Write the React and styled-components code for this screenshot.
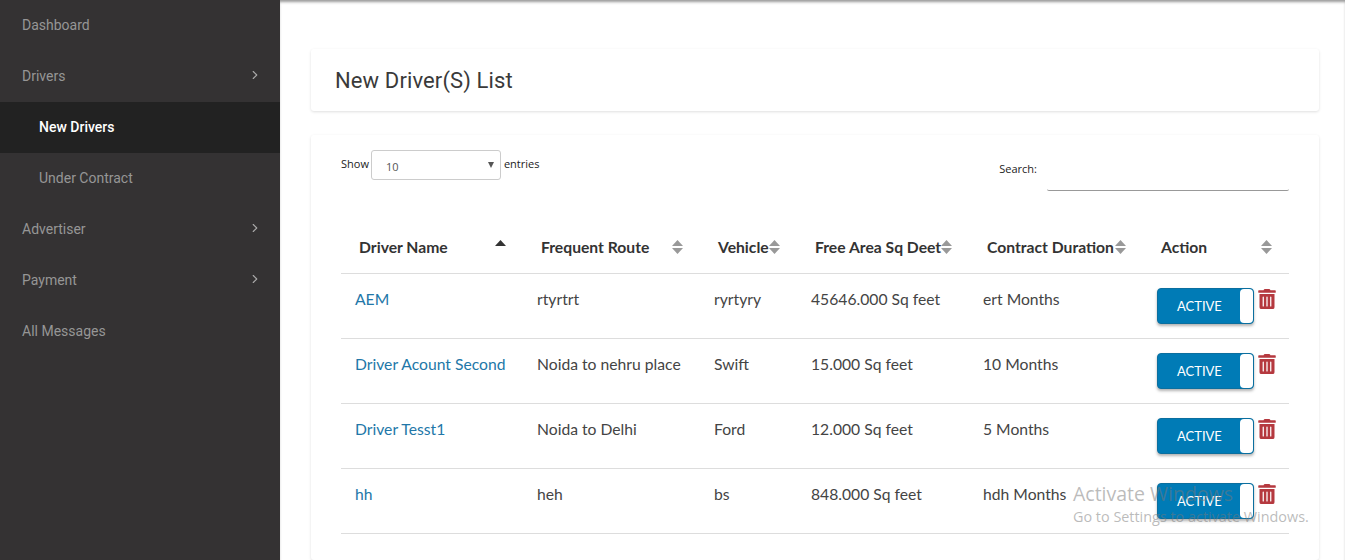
import React from "react";
import styled, { createGlobalStyle } from "styled-components";
import { FaTrashAlt } from "react-icons/fa";
import { FiChevronRight } from "react-icons/fi";

const GlobalStyle = createGlobalStyle`
  html, body {
    margin: 0;
    padding: 0;
    background: #fff;
    overflow: hidden;
  }
  * { box-sizing: border-box; }
`;

const Page = styled.div`
  display: flex;
  height: 560px;
  overflow: hidden;
  position: relative;
`;

const Sidebar = styled.nav`
  width: 280px;
  flex: none;
  background: #343233;
  font-family: Roboto, sans-serif;
  font-size: 14px;
`;

const NavItem = styled.div`
  height: 51px;
  display: flex;
  align-items: center;
  justify-content: space-between;
  padding: 0 18px 2px ${(p) => (p.$sub ? "39px" : "22px")};
  color: ${(p) => (p.$active ? "#fff" : "#969696")};
  background: ${(p) => (p.$active ? "#222222" : "transparent")};
  font-weight: ${(p) => (p.$active ? 500 : 400)};
  svg {
    color: #aaa;
    margin-top: -2px;
  }
`;

const Main = styled.main`
  flex: 1;
  min-width: 0;
  padding: 49px 26px 0 31px;
  box-shadow: inset 0 3px 3px -1px #999;
  display: flex;
  flex-direction: column;
  gap: 24px;
`;

const Card = styled.section`
  background: #fff;
  border-radius: 3px;
  box-shadow: 0 1px 3px rgba(0, 0, 0, 0.13);
`;

const TitleCard = styled(Card)`
  height: 62px;
  display: flex;
  align-items: center;
  padding-left: 24px;
`;

const Title = styled.h1`
  margin: 0;
  font-family: Roboto, sans-serif;
  font-size: 22px;
  font-weight: 400;
  letter-spacing: 0.12px;
  color: #3a3a3a;
`;

const ListCard = styled(Card)`
  flex: 1;
  padding: 15px 30px 0;
  font-family: Lato, sans-serif;
`;

const Controls = styled.div`
  display: flex;
  justify-content: space-between;
  height: 72px;
  font-family: "Open Sans", sans-serif;
  font-size: 11px;
  color: #222;
`;

const Length = styled.div`
  display: flex;
  align-items: flex-start;
  gap: 2px;
  span {
    margin-top: 6px;
  }
  span:last-child {
    margin-left: 1px;
  }
`;

const SelectBox = styled.div`
  width: 130px;
  height: 30px;
  border: 1px solid #ccc;
  border-radius: 3px;
  display: flex;
  align-items: center;
  justify-content: space-between;
  padding: 2px 4px 0 14px;
  color: #555;
  font-size: 11px;
  &::after {
    content: "";
    border-left: 3.5px solid transparent;
    border-right: 3.5px solid transparent;
    border-top: 6px solid #555;
    margin-right: 2px;
    margin-top: -2px;
  }
`;

const Search = styled.div`
  display: flex;
  align-items: flex-start;
  gap: 10px;
  span {
    margin-top: 11px;
  }
`;

const SearchInput = styled.div`
  width: 242px;
  height: 41px;
  border-bottom: 1px solid #999;
  border-radius: 0 0 2px 2px;
`;

const Table = styled.table`
  width: 948px;
  border-collapse: collapse;
  table-layout: fixed;
`;

const Head = styled.th`
  height: 51px;
  padding: 0 0 1px 18px;
  font-size: 15.7px;
  font-weight: 700;
  text-align: left;
  color: #333;
  white-space: nowrap;
  border-bottom: 1px solid #ddd;
`;

const HeadInner = styled.div`
  display: flex;
  align-items: center;
  justify-content: space-between;
  padding-right: 17px;
  svg {
    flex: none;
    margin-top: 1px;
  }
`;

const Cell = styled.td`
  height: 65px;
  padding: 0 0 14px 14px;
  font-size: 15.7px;
  color: #444;
  white-space: nowrap;
  border-bottom: 1px solid #ddd;
`;

const DriverLink = styled.a`
  color: #2277a8;
  text-decoration: none;
`;

const ActionCell = styled(Cell)`
  padding-bottom: 0;
`;

const ActionRow = styled.div`
  display: flex;
  align-items: flex-start;
  gap: 3px;
  svg {
    color: #b5393f;
    margin-top: 1px;
  }
`;

const Toggle = styled.div`
  width: 97px;
  height: 36px;
  background: #007bb6;
  border: 1px solid #0b6f9f;
  border-radius: 4px;
  box-shadow: 0 2px 3px rgba(0, 0, 0, 0.3);
  color: #fff;
  font-size: 13px;
  display: flex;
  align-items: center;
  justify-content: space-between;
  padding-left: 19px;
  &::after {
    content: "";
    width: 13px;
    height: 34px;
    background: #fff;
    border-radius: 4px;
  }
`;

const Watermark = styled.div`
  position: absolute;
  left: 1073px;
  top: 481px;
  font-family: "Open Sans", sans-serif;
  color: rgba(120, 120, 120, 0.5);
  pointer-events: none;
`;

const WatermarkTitle = styled.div`
  font-size: 19.5px;
  line-height: 26px;
`;

const WatermarkText = styled.div`
  font-size: 14.4px;
  line-height: 20px;
`;

const SortIcon = ({ up }) => (
  <svg width="11" height="16" viewBox="0 0 11 16">
    <path d="M5.5 1 L11 7 H0 Z" fill={up ? "#333" : "#999"} />
    {!up && <path d="M5.5 15 L11 9 H0 Z" fill="#999" />}
  </svg>
);

const columns = [
  { label: "Driver Name", width: 182, up: true },
  { label: "Frequent Route", width: 177 },
  { label: "Vehicle", width: 97 },
  { label: "Free Area Sq Deet", width: 172 },
  { label: "Contract Duration", width: 174 },
  { label: "Action", width: 146 },
];

const drivers = [
  { name: "AEM", route: "rtyrtrt", vehicle: "ryrtyry", area: "45646.000 Sq feet", term: "ert Months" },
  { name: "Driver Acount Second", route: "Noida to nehru place", vehicle: "Swift", area: "15.000 Sq feet", term: "10 Months" },
  { name: "Driver Tesst1", route: "Noida to Delhi", vehicle: "Ford", area: "12.000 Sq feet", term: "5 Months" },
  { name: "hh", route: "heh", vehicle: "bs", area: "848.000 Sq feet", term: "hdh Months" },
];

export default function App() {
  return (
    <>
      <GlobalStyle />
      <Page>
        <Sidebar>
          <NavItem>Dashboard</NavItem>
          <NavItem>
            Drivers <FiChevronRight size={14} />
          </NavItem>
          <NavItem $sub $active>New Drivers</NavItem>
          <NavItem $sub>Under Contract</NavItem>
          <NavItem>
            Advertiser <FiChevronRight size={14} />
          </NavItem>
          <NavItem>
            Payment <FiChevronRight size={14} />
          </NavItem>
          <NavItem>All Messages</NavItem>
        </Sidebar>
        <Main>
          <TitleCard>
            <Title>New Driver(S) List</Title>
          </TitleCard>
          <ListCard>
            <Controls>
              <Length>
                <span>Show</span>
                <SelectBox>10</SelectBox>
                <span>entries</span>
              </Length>
              <Search>
                <span>Search:</span>
                <SearchInput />
              </Search>
            </Controls>
            <Table>
              <colgroup>
                {columns.map((c) => (
                  <col key={c.label} width={c.width} />
                ))}
              </colgroup>
              <thead>
                <tr>
                  {columns.map((c) => (
                    <Head key={c.label}>
                      <HeadInner>
                        {c.label}
                        <SortIcon up={c.up} />
                      </HeadInner>
                    </Head>
                  ))}
                </tr>
              </thead>
              <tbody>
                {drivers.map((d) => (
                  <tr key={d.name}>
                    <Cell>
                      <DriverLink href="#">{d.name}</DriverLink>
                    </Cell>
                    <Cell>{d.route}</Cell>
                    <Cell>{d.vehicle}</Cell>
                    <Cell>{d.area}</Cell>
                    <Cell>{d.term}</Cell>
                    <ActionCell>
                      <ActionRow>
                        <Toggle>ACTIVE</Toggle>
                        <FaTrashAlt size={20} />
                      </ActionRow>
                    </ActionCell>
                  </tr>
                ))}
              </tbody>
            </Table>
          </ListCard>
        </Main>
        <Watermark>
          <WatermarkTitle>Activate Windows</WatermarkTitle>
          <WatermarkText>Go to Settings to activate Windows.</WatermarkText>
        </Watermark>
      </Page>
    </>
  );
}
